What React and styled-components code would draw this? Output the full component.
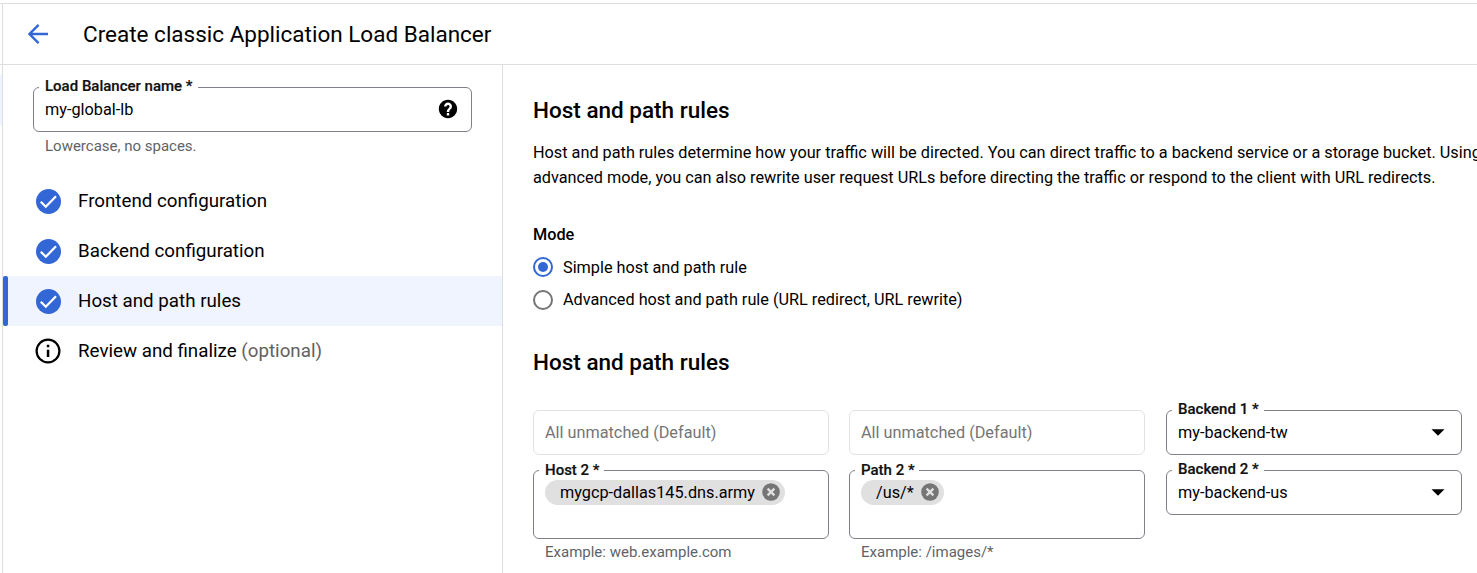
import React from 'react';
import styled, { createGlobalStyle } from 'styled-components';

const GlobalStyle = createGlobalStyle`
  *, *::before, *::after { box-sizing: border-box; }
  body {
    margin: 0;
    overflow: hidden;
    background: #fff;
    color: #000;
    font-family: Roboto, "Liberation Sans", sans-serif;
    font-size: 16.25px;
  }
  h1, h2, h3, p { margin: 0; }
`;

const Page = styled.div`
  display: flex;
  height: 573px;
  padding-top: 3px;
  overflow: hidden;
`;

const Gutter = styled.div`
  flex: none;
  width: 2px;
  border-top: 1px solid #dedede;
`;

const GutterHeader = styled.div`
  height: 61px;
  margin-bottom: 10px;
  border-bottom: 1px solid #dedede;
`;

const GutterMark = styled.div`
  height: 50px;
  background: #f0f4fe;
`;

const Panel = styled.div`
  flex: 1;
  min-width: 0;
  display: flex;
  flex-direction: column;
  border-top: 1px solid #dedede;
  border-left: 1px solid #dedede;
`;

const Header = styled.header`
  flex: none;
  display: flex;
  align-items: center;
  height: 61px;
  padding-left: 25px;
  border-bottom: 1px solid #dedede;
`;

const BackIcon = styled.svg`
  width: 20px;
  height: 20px;
  margin-right: 35px;
`;

const Title = styled.h1`
  font-size: 22.5px;
  font-weight: 400;
  line-height: 30px;
`;

const Body = styled.div`
  flex: 1;
  display: flex;
  min-height: 0;
`;

const Sidebar = styled.aside`
  flex: none;
  width: 500px;
  border-right: 1px solid #dedede;
`;

const NameBlock = styled.div`
  height: 111px;
  padding: 22px 30px 0;
`;

const Field = styled.div`
  position: relative;
  display: flex;
  align-items: ${(p) => (p.$tall ? 'flex-start' : 'center')};
  height: ${(p) => (p.$tall ? 69 : 45)}px;
  padding: ${(p) => (p.$tall ? '9px' : '0')} 11px 0;
  border: 1px solid ${(p) => (p.$disabled ? '#e2e2e2' : '#7e818a')};
  border-radius: 6px;
  color: ${(p) => (p.$disabled ? '#757575' : '#000')};
`;

const Label = styled.span`
  position: absolute;
  left: 5px;
  top: ${(p) => (p.$low ? -10 : -11)}px;
  padding: 0 ${(p) => (p.$low ? 4.5 : 5.5)}px 0 6px;
  background: #fff;
  color: #111;
  font-size: 15px;
  font-weight: 500;
  line-height: 18px;
  white-space: nowrap;
  -webkit-text-stroke: 0.2px #111;
`;

const Value = styled.span`
  flex: 1;
  line-height: 25px;
`;

const Hint = styled.div`
  padding: ${(p) => (p.$close ? 4 : 5)}px 12px 0;
  color: #5f6368;
  font-size: 15px;
  line-height: 18px;
`;

const HelpIcon = styled.svg`
  width: 22px;
  height: 22px;
  margin: 0 1.5px 0.5px 0;
`;

const Step = styled.div`
  display: flex;
  align-items: center;
  height: 50px;
  background: ${(p) => (p.$active ? '#f0f4fe' : 'transparent')};
  font-size: 18.75px;
`;

const StepBar = styled.span`
  width: 5px;
  height: 50px;
  margin-right: 27px;
  border-radius: 2px;
  background: ${(p) => (p.$active ? '#3367d6' : 'transparent')};
`;

const StepIcon = styled.svg`
  width: 26px;
  height: 26px;
  margin-right: 17px;
`;

const Optional = styled.span`
  color: #616161;
`;

const Content = styled.main`
  flex: 1;
  min-width: 0;
  padding: 30px 0 0 30px;
`;

const Heading = styled.h2`
  font-size: 22.5px;
  font-weight: 500;
  line-height: 30px;
`;

const Description = styled.p`
  width: 950px;
  margin: 15px 0 32px;
  line-height: 25px;
`;

const ModeTitle = styled.h3`
  margin-bottom: 8px;
  font-size: 16.25px;
  font-weight: 500;
  line-height: 25px;
`;

const RadioRow = styled.div`
  display: flex;
  align-items: ${(p) => (p.$raised ? 'flex-start' : 'center')};
  gap: 10px;
  height: 25px;
  padding-top: ${(p) => (p.$raised ? 2 : 0)}px;
  line-height: ${(p) => (p.$raised ? 22 : 25)}px;
  margin-bottom: ${(p) => p.$gap}px;
`;

const Radio = styled.span`
  display: flex;
  align-items: center;
  justify-content: center;
  width: 20px;
  height: 20px;
  border: 2px solid ${(p) => (p.$checked ? '#3367d6' : '#757575')};
  border-radius: 50%;
  &::after {
    content: '';
    width: 10px;
    height: 10px;
    border-radius: 50%;
    background: ${(p) => (p.$checked ? '#3367d6' : 'transparent')};
  }
`;

const Rules = styled.div`
  display: grid;
  grid-template-columns: 296px 297px 296px;
  column-gap: 20px;
  row-gap: 15px;
  margin-top: 33px;
`;

const RuleCell = styled.div`
  width: 296px;
`;

const Chip = styled.span`
  display: inline-flex;
  align-items: center;
  gap: 7px;
  height: 25px;
  padding: 0 5px 0 15px;
  border-radius: 12.5px;
  background: #e0e0e0;
`;

const ChipIcon = styled.svg`
  width: 18px;
  height: 18px;
  margin-bottom: 0.5px;
`;

const Arrow = styled.svg`
  width: 14px;
  height: 7px;
  margin-right: 5.5px;
`;

function DoneIcon() {
  return (
    <StepIcon viewBox="0 0 26 26">
      <circle cx="13.5" cy="13.5" r="12.5" fill="#3367d6" />
      <path d="M5.8 13.7l5 5L21 8.2" fill="none" stroke="#fff" strokeWidth="2.3" />
    </StepIcon>
  );
}

function InfoIcon() {
  return (
    <StepIcon viewBox="0 0 26 26">
      <circle cx="13" cy="13" r="11.4" fill="none" stroke="#000" strokeWidth="2.2" />
      <path d="M11.8 6.8h2.5v2.5h-2.5zM11.8 11.8h2.5v7.2h-2.5z" />
    </StepIcon>
  );
}

function RemovableChip({ children }) {
  return (
    <Chip>
      {children}
      <ChipIcon viewBox="0 0 18 18">
        <circle cx="9" cy="9" r="8.8" fill="#757575" />
        <path d="M5.6 5.6l6.8 6.8M12.4 5.6l-6.8 6.8" stroke="#e0e0e0" strokeWidth="2.3" />
      </ChipIcon>
    </Chip>
  );
}

function Select({ label, value }) {
  return (
    <Field>
      <Label>{label}</Label>
      <Value>{value}</Value>
      <Arrow viewBox="0 0 14 7">
        <path d="M0.5 0.3h13L7 6.7z" />
      </Arrow>
    </Field>
  );
}

function ChipField({ label, value, hint }) {
  return (
    <RuleCell>
      <Field $tall>
        <Label $low>{label}</Label>
        <RemovableChip>{value}</RemovableChip>
      </Field>
      <Hint $close>{hint}</Hint>
    </RuleCell>
  );
}

function DefaultField() {
  return (
    <RuleCell>
      <Field $disabled><Value>All unmatched (Default)</Value></Field>
    </RuleCell>
  );
}

export default function App() {
  return (
    <Page>
      <GlobalStyle />
      <Gutter>
        <GutterHeader />
        <GutterMark />
      </Gutter>
      <Panel>
        <Header>
          <BackIcon viewBox="0 0 20 20">
            <path d="M20 10H2M10.6 0.9L1.5 10l9.1 9.1" fill="none" stroke="#3367d6" strokeWidth="2.4" />
          </BackIcon>
          <Title>Create classic Application Load Balancer</Title>
        </Header>
        <Body>
          <Sidebar>
            <NameBlock>
              <Field>
                <Label>Load Balancer name *</Label>
                <Value>my-global-lb</Value>
                <HelpIcon viewBox="0 0 24 24">
                  <path d="M12 2C6.48 2 2 6.48 2 12s4.48 10 10 10 10-4.480 10-10S17.520 2 12 2zm1.300 17h-2.600v-2.600h2.600V19zm2.200-7.400l-.9.92C13.700 13.400 13.300 14 13.300 15.300h-2.600v-.5c0-1.100.45-2.100 1.170-2.830l1.240-1.260c.37-.36.59-.86.59-1.410 0-1-.75-1.750-1.700-1.750s-1.800.8-1.800 1.800H7.700C7.700 6.900 9.600 5 12 5s4.300 1.900 4.300 4.200c0 .95-.3 1.750-.8 2.400z" />
                </HelpIcon>
              </Field>
              <Hint>Lowercase, no spaces.</Hint>
            </NameBlock>
            <Step><StepBar /><DoneIcon />Frontend configuration</Step>
            <Step><StepBar /><DoneIcon />Backend configuration</Step>
            <Step $active><StepBar $active /><DoneIcon />Host and path rules</Step>
            <Step><StepBar /><InfoIcon /><span>Review and finalize <Optional>(optional)</Optional></span></Step>
          </Sidebar>
          <Content>
            <Heading>Host and path rules</Heading>
            <Description>
              Host and path rules determine how your traffic will be directed. You can direct traffic to a backend
              service or a storage bucket. Using advanced mode, you can also rewrite user request URLs before
              directing the traffic or respond to the client with URL redirects.
            </Description>
            <ModeTitle>Mode</ModeTitle>
            <RadioRow $gap={7} $raised><Radio $checked />Simple host and path rule</RadioRow>
            <RadioRow $gap={35}><Radio />Advanced host and path rule (URL redirect, URL rewrite)</RadioRow>
            <Heading>Host and path rules</Heading>
            <Rules>
              <DefaultField />
              <DefaultField />
              <Select label="Backend 1 *" value="my-backend-tw" />
              <ChipField label="Host 2 *" value="mygcp-dallas145.dns.army" hint="Example: web.example.com" />
              <ChipField label="Path 2 *" value="/us/*" hint="Example: /images/*" />
              <Select label="Backend 2 *" value="my-backend-us" />
            </Rules>
          </Content>
        </Body>
      </Panel>
    </Page>
  );
}
